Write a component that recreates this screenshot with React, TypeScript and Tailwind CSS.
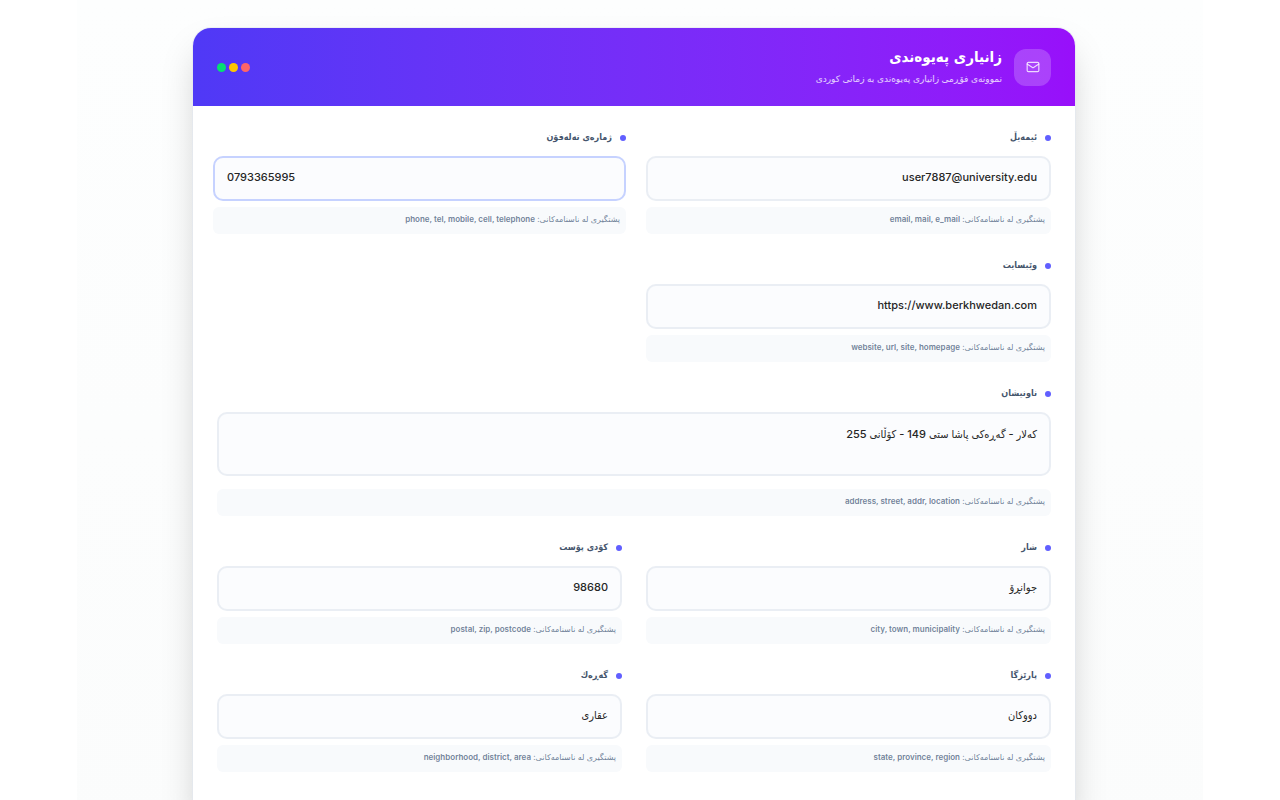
import { Mail } from "lucide-react";
import clsx from "clsx";

type FieldProps = {
  id: string;
  label: string;
  value: string;
  aliases: string;
  type?: string;
  ltr?: boolean;
  active?: boolean;
  multiline?: boolean;
};

const Field = ({
  id,
  label,
  value,
  aliases,
  type = "text",
  ltr,
  active,
  multiline,
}: FieldProps) => {
  const control = clsx(
    "block w-full resize-none rounded-[10px] border-2 bg-[#fbfcfe] px-3 text-[11px] font-medium text-neutral-800 outline-none font-[Inter,'DejaVu_Sans_Condensed','DejaVu_Sans',sans-serif]",
    active ? "border-indigo-200" : "border-slate-200/70",
    ltr ? "text-left" : "text-right",
  );

  return (
    <div className={clsx(active && "-mx-1", multiline && "col-span-2")}>
      <label
        htmlFor={id}
        className="mb-[10px] flex h-4 items-center gap-2 font-['DejaVu_Sans_Condensed','DejaVu_Sans',sans-serif] text-[9px] font-bold text-slate-600"
      >
        <span className="size-[6px] rounded-full bg-[#615fff]" />
        {label}
      </label>
      {multiline ? (
        <textarea
          id={id}
          defaultValue={value}
          className={clsx(control, "h-16 pt-3 leading-4")}
        />
      ) : (
        <input
          id={id}
          type={type}
          defaultValue={value}
          dir={ltr ? "ltr" : "rtl"}
          className={clsx(control, "h-[45px] pb-1")}
        />
      )}
      <p
        className={clsx(
          "h-[27px] rounded-md bg-slate-50 px-[6px] text-[8px] leading-[25px] text-slate-500/90",
          multiline ? "mt-[13px]" : "mt-[6px]",
        )}
      >
        پشتگیری لە ناسنامەکانی:{" "}
        <bdi className="font-semibold">{aliases}</bdi>
      </p>
    </div>
  );
};

const App = () => {
  return (
    <div
      dir="rtl"
      className="min-h-screen bg-white font-[Inter,'DejaVu_Sans',sans-serif]"
    >
      <div className="mx-auto min-h-screen max-w-[1126px] bg-linear-to-b from-[#fdfefe] to-[#fbfcfc] pt-7 pr-3 pb-10">
        <main className="mx-auto max-w-[882px] overflow-hidden rounded-[18px] bg-white shadow-[0_19px_38px_-9px_rgba(0,0,0,0.25)] ring-1 ring-slate-200/60">
          <header className="flex h-[78px] items-center justify-between bg-linear-to-r from-[#4f39f6] to-[#980ffa] px-6">
            <div className="flex items-center gap-3">
              <div className="flex size-[37px] items-center justify-center rounded-xl bg-white/20">
                <Mail className="size-[14px] text-white/80" />
              </div>
              <div>
                <h1 className="font-['DejaVu_Sans_Condensed','DejaVu_Sans',sans-serif] text-[15px] leading-6 font-bold text-white">
                  زانیاری پەیوەندی
                </h1>
                <p className="text-[9px] leading-5 text-white/80">
                  نموونەی فۆڕمی زانیاری پەیوەندی بە زمانی کوردی
                </p>
              </div>
            </div>
            <div className="flex gap-[3px]">
              <span className="size-[9px] rounded-full bg-[#ff6467]" />
              <span className="size-[9px] rounded-full bg-[#fdc700]" />
              <span className="size-[9px] rounded-full bg-[#05df72]" />
            </div>
          </header>

          <form className="grid grid-cols-2 gap-6 px-6 pt-6 pb-12">
            <Field
              id="email"
              type="email"
              label="ئیمەیڵ"
              value="user7887@university.edu"
              aliases="email, mail, e_mail"
            />
            <Field
              id="phone"
              type="tel"
              label="ژمارەی تەلەفۆن"
              value="0793365995"
              aliases="phone, tel, mobile, cell, telephone"
              ltr
              active
            />
            <Field
              id="website"
              type="url"
              label="وێبسایت"
              value="https://www.berkhwedan.com"
              aliases="website, url, site, homepage"
            />
            <Field
              id="address"
              label="ناونیشان"
              value="کەلار - گەڕەکی پاشا ستی 149 - کۆڵانی 255"
              aliases="address, street, addr, location"
              multiline
            />
            <Field
              id="city"
              label="شار"
              value="جوانڕۆ"
              aliases="city, town, municipality"
            />
            <Field
              id="postal"
              label="کۆدی پۆست"
              value="98680"
              aliases="postal, zip, postcode"
            />
            <Field
              id="state"
              label="پارێزگا"
              value="دووکان"
              aliases="state, province, region"
            />
            <Field
              id="neighborhood"
              label="گەڕەك"
              value="عقاری"
              aliases="neighborhood, district, area"
            />
          </form>
        </main>
      </div>
    </div>
  );
};

export default App;
